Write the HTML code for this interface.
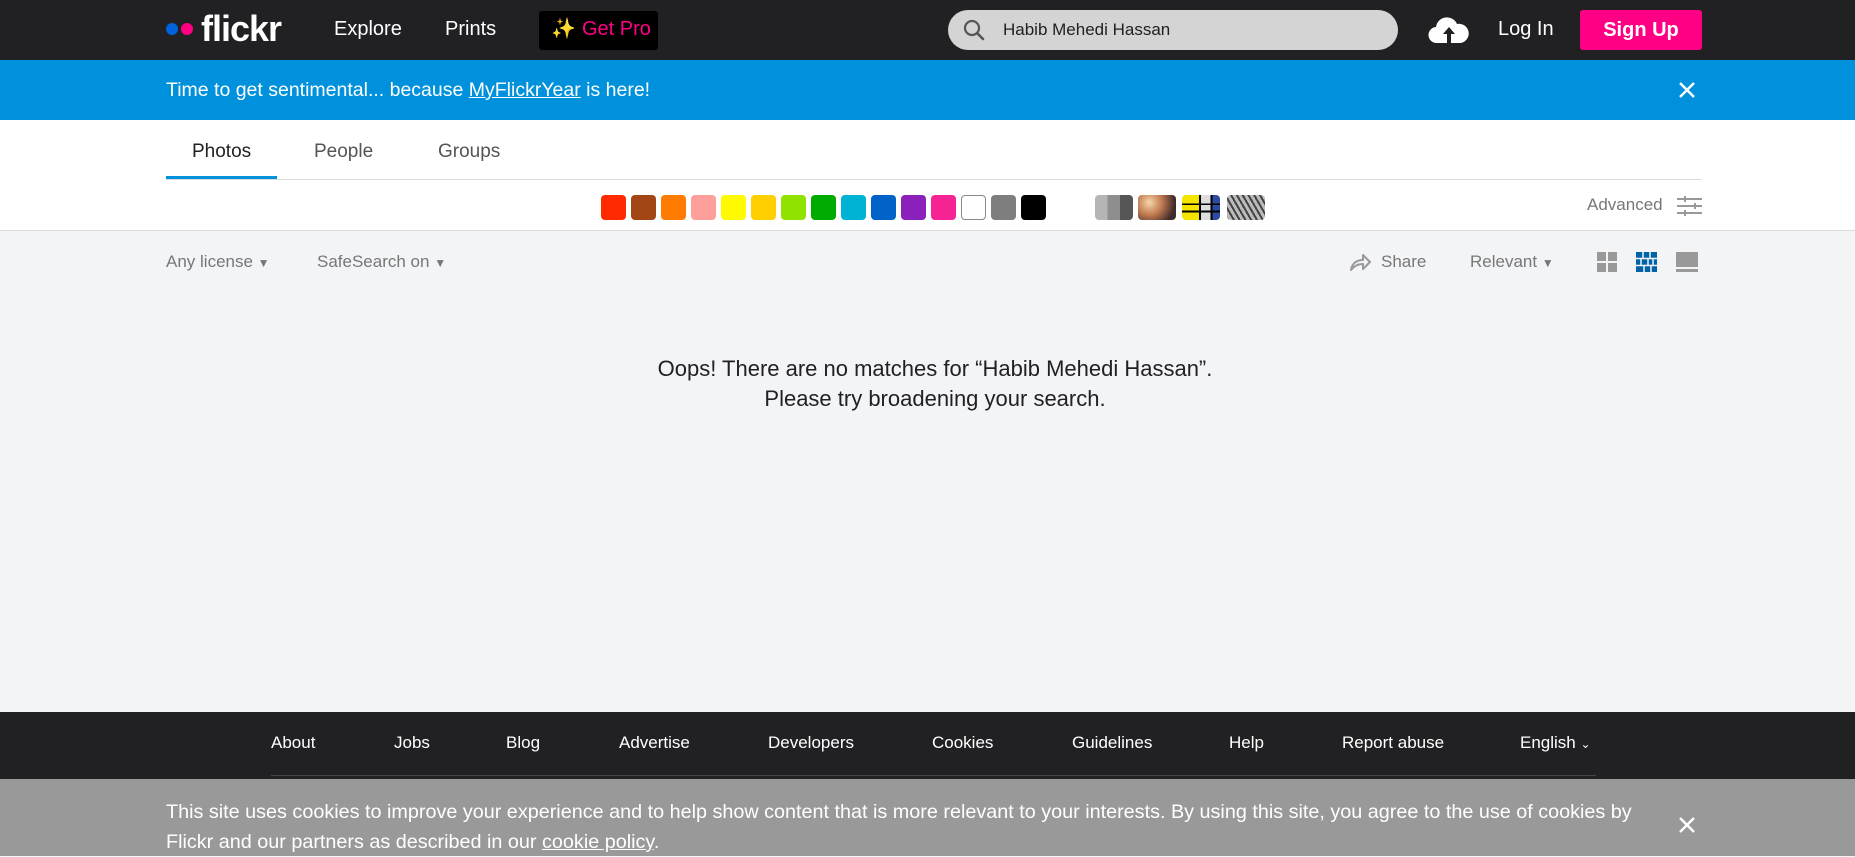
<!DOCTYPE html>
<html><head><meta charset="utf-8"><style>
*{margin:0;padding:0;box-sizing:border-box}
body{width:1855px;height:856px;overflow:hidden;background:#f3f4f6;font-family:"Liberation Sans",sans-serif;position:relative;color:#212124}
.a{position:absolute;white-space:nowrap}
.top{left:0;top:0;width:1855px;height:60px;background:#212124}
.ban{left:0;top:60px;width:1855px;height:60px;background:#0091dc}
.wh{left:0;top:120px;width:1855px;height:111px;background:#fff;border-bottom:1px solid #ddd}
.sw{top:195px;width:25px;height:25px;border-radius:4px}
.fl{color:#fff;font-size:17px;top:733px}
</style></head><body>
<div class="a top"></div>
<div class="a" style="left:166px;top:23px;width:12px;height:12px;border-radius:50%;background:#0063dc"></div>
<div class="a" style="left:181px;top:23px;width:12px;height:12px;border-radius:50%;background:#ff0084"></div>
<div class="a" style="left:201px;top:8px;color:#fff;font-size:36px;font-weight:bold;letter-spacing:-1px">flickr</div>
<div class="a" style="left:334px;top:18px;color:#fff;font-size:20px">Explore</div>
<div class="a" style="left:445px;top:18px;color:#fff;font-size:20px">Prints</div>
<div class="a" style="left:539px;top:11px;width:119px;height:39px;background:#000;border-radius:3px"></div>
<div class="a" style="left:551px;top:16px;color:#f5b56a;font-size:20px">✨</div>
<div class="a" style="left:582px;top:18px;color:#ff0084;font-size:20px">Get Pro</div>
<div class="a" style="left:948px;top:10px;width:450px;height:40px;background:#d4d4d4;border-radius:20px"></div>
<svg class="a" style="left:962px;top:18px" width="24" height="24" viewBox="0 0 24 24"><circle cx="10" cy="10" r="7" fill="none" stroke="#555" stroke-width="2.2"/><path d="M15 15l6 6" stroke="#555" stroke-width="2.6" stroke-linecap="round"/></svg>
<div class="a" style="left:1003px;top:20px;font-size:17px;color:#212124">Habib Mehedi Hassan</div>
<svg class="a" style="left:1428px;top:15px" width="42" height="30" viewBox="0 0 42 30"><path d="M9 28a8 8 0 0 1-1-16 11 11 0 0 1 21-3 9 9 0 0 1 4 19z" fill="#fff"/><path d="M21 12l-6 7h4v9h4v-9h4z" fill="#212124"/></svg>
<div class="a" style="left:1498px;top:18px;color:#fff;font-size:20px">Log In</div>
<div class="a" style="left:1580px;top:10px;width:122px;height:40px;background:#ff0084;border-radius:3px;color:#fff;font-size:20px;font-weight:bold;text-align:center;line-height:40px">Sign Up</div>
<div class="a ban"></div>
<div class="a" style="left:166px;top:79px;color:#fff;font-size:19.5px">Time to get sentimental... because <u>MyFlickrYear</u> is here!</div>
<svg class="a" style="left:1678px;top:81px" width="18" height="18"><path d="M2 2l14 14M16 2L2 16" stroke="#fff" stroke-width="2.5"/></svg>
<div class="a wh"></div>
<div class="a" style="left:166px;top:179px;width:1536px;height:1px;background:#ddd"></div>
<div class="a" style="left:166px;top:176px;width:111px;height:3px;background:#0091dc"></div>
<div class="a" style="left:192px;top:141px;font-size:19px;color:#212124">Photos</div>
<div class="a" style="left:314px;top:141px;font-size:19px;color:#555">People</div>
<div class="a" style="left:438px;top:141px;font-size:19px;color:#555">Groups</div>
<div class="a sw" style="left:601px;background:#ff2a00"></div>
<div class="a sw" style="left:631px;background:#a24615"></div>
<div class="a sw" style="left:661px;background:#ff7c00"></div>
<div class="a sw" style="left:691px;background:#ff9f9c"></div>
<div class="a sw" style="left:721px;background:#fffa00"></div>
<div class="a sw" style="left:751px;background:#ffcf00"></div>
<div class="a sw" style="left:781px;background:#90e200"></div>
<div class="a sw" style="left:811px;background:#00ab00"></div>
<div class="a sw" style="left:841px;background:#00b2d4"></div>
<div class="a sw" style="left:871px;background:#0062c6"></div>
<div class="a sw" style="left:901px;background:#8c20ba"></div>
<div class="a sw" style="left:931px;background:#f52394"></div>
<div class="a sw" style="left:961px;background:#fff;border:1px solid #888"></div>
<div class="a sw" style="left:991px;background:#7e7e7e"></div>
<div class="a sw" style="left:1021px;background:#000"></div>
<div class="a sw" style="left:1095px;width:38px;background:linear-gradient(90deg,#b5b5b5 33%,#8e8e8e 33% 66%,#555 66%)"></div>
<div class="a sw" style="left:1138px;width:38px;background:radial-gradient(circle at 30% 30%,#f6d6a8,#c07a50 40%,#402a2a 80%)"></div>
<div class="a sw" style="left:1182px;width:38px;background:linear-gradient(90deg,transparent 45%,#000 45% 50%,transparent 50% 75%,#000 75% 80%,transparent 80%),linear-gradient(0deg,transparent 30%,#000 30% 38%,transparent 38% 60%,#000 60% 66%,transparent 66%),linear-gradient(90deg,#f4e400 45%,#ddd 45% 75%,#2c4aa0 75%)"></div>
<div class="a sw" style="left:1227px;width:38px;background:repeating-linear-gradient(60deg,#444 0 2px,#bbb 2px 5px)"></div>
<div class="a" style="left:1587px;top:195px;font-size:17px;color:#777">Advanced</div>
<svg class="a" style="left:1677px;top:195px" width="25" height="22"><path d="M0 4h25M0 11h25M0 18h25" stroke="#999" stroke-width="2"/><path d="M8 1v6M18 8v6M8 15v6" stroke="#999" stroke-width="2"/></svg>
<div class="a" style="left:166px;top:252px;font-size:17px;color:#777">Any license <span style="font-size:12px">▼</span></div>
<div class="a" style="left:317px;top:252px;font-size:17px;color:#777">SafeSearch on <span style="font-size:12px">▼</span></div>
<svg class="a" style="left:1349px;top:252px" width="22" height="20" viewBox="0 0 22 20"><path d="M2 18c1-7 6-10 12-10V3l7 7-7 7v-5c-5 0-9 2-12 6z" fill="none" stroke="#999" stroke-width="2" stroke-linejoin="round"/></svg>
<div class="a" style="left:1381px;top:252px;font-size:17px;color:#777">Share</div>
<div class="a" style="left:1470px;top:252px;font-size:17px;color:#777">Relevant <span style="font-size:12px">▼</span></div>
<svg class="a" style="left:1597px;top:252px" width="20" height="20"><rect x="0" y="0" width="9" height="9" fill="#999"/><rect x="11" y="0" width="9" height="9" fill="#999"/><rect x="0" y="11" width="9" height="9" fill="#999"/><rect x="11" y="11" width="9" height="9" fill="#999"/></svg>
<svg class="a" style="left:1636px;top:252px" width="21" height="20"><rect width="21" height="20" fill="#0063a8"/><path d="M0 6.5h21M0 13.5h21M7 0v6.5M14 0v6.5M5 6.5v7M12 6.5v7M17 6.5v7M8 13.5v7M15 13.5v7" stroke="#f3f4f6" stroke-width="1.5"/></svg>
<svg class="a" style="left:1676px;top:252px" width="22" height="20"><rect width="22" height="15" fill="#999"/><rect y="17" width="22" height="3" fill="#999"/></svg>
<div class="a" style="left:0;width:1870px;top:354px;text-align:center;font-size:22px;line-height:30px;color:#212124">Oops! There are no matches for “Habib Mehedi Hassan”.<br>Please try broadening your search.</div>
<div class="a" style="left:0;top:712px;width:1855px;height:68px;background:#212124"></div>
<div class="a" style="left:271px;top:775px;width:1325px;height:1px;background:#444"></div>
<div class="a fl" style="left:271px">About</div>
<div class="a fl" style="left:394px">Jobs</div>
<div class="a fl" style="left:506px">Blog</div>
<div class="a fl" style="left:619px">Advertise</div>
<div class="a fl" style="left:768px">Developers</div>
<div class="a fl" style="left:932px">Cookies</div>
<div class="a fl" style="left:1072px">Guidelines</div>
<div class="a fl" style="left:1229px">Help</div>
<div class="a fl" style="left:1342px">Report abuse</div>
<div class="a fl" style="left:1520px">English <span style="font-size:12px">⌄</span></div>
<div class="a" style="left:0;top:779px;width:1855px;height:77px;background:#999"></div>
<div class="a" style="left:166px;top:797px;color:#fff;font-size:19.8px;line-height:30px">This site uses cookies to improve your experience and to help show content that is more relevant to your interests. By using this site, you agree to the use of cookies by<br>Flickr and our partners as described in our <u>cookie policy</u>.</div>
<svg class="a" style="left:1678px;top:816px" width="18" height="18"><path d="M2 2l14 14M16 2L2 16" stroke="#fff" stroke-width="2.5"/></svg>
</body></html>
